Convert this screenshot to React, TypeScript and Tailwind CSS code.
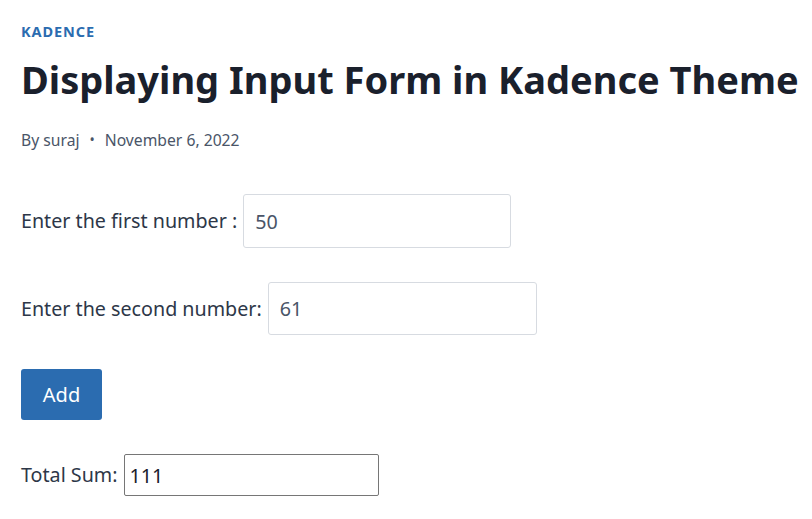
export default function App() {
  return (
    <div className="min-h-[519px] bg-white px-[21px] pt-[21px] font-['Noto_Sans',sans-serif]">
      <div className="text-[14.5px] font-bold uppercase tracking-[0.9px] leading-[20px] text-[#2b6cb0]">Kadence</div>
      <h1 className="mt-[14px] whitespace-nowrap text-[38px] font-bold leading-[48px] text-[#1a202c]">
        Displaying Input Form in Kadence Theme
      </h1>
      <div className="mt-[27px] flex items-center text-[15.7px] leading-[20px] text-[#4a5568]">
        <span>By suraj</span>
        <span className="mx-[10px] text-[14px]">•</span>
        <span>November 6, 2022</span>
      </div>
      <div className="mt-[44px] flex items-center text-[19.7px] text-[#2d3748]">
        <span>Enter the first number :</span>
        <input
          defaultValue="50"
          className="ml-[6px] h-[54px] w-[268px] rounded-[3px] border border-[#d7dbe1] px-[11px] text-[19.7px] text-[#4a5568] outline-none"
        />
      </div>
      <div className="mt-[34px] flex items-center text-[19.7px] text-[#2d3748]">
        <span>Enter the second number:</span>
        <input
          defaultValue="61"
          className="ml-[6px] h-[53px] w-[269px] rounded-[3px] border border-[#d7dbe1] px-[11px] text-[19.7px] text-[#4a5568] outline-none"
        />
      </div>
      <button className="mt-[34px] flex h-[51px] w-[81px] items-center justify-center rounded-[3px] bg-[#2b6cb0] text-[20px] text-white">
        Add
      </button>
      <div className="mt-[34px] flex items-center text-[19.7px] text-[#2d3748]">
        <span>Total Sum:</span>
        <input
          defaultValue="111"
          className="ml-[6px] h-[42px] w-[255px] rounded-[2px] border border-[#767676] px-[5px] text-[19.7px] text-[#1a202c] outline-none"
        />
      </div>
    </div>
  );
}
